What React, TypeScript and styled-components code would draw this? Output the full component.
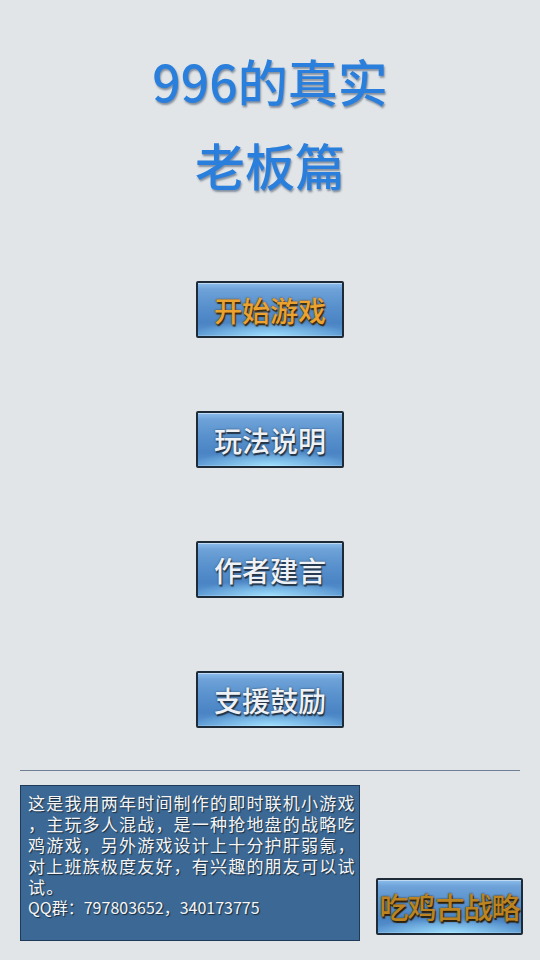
import React from "react";
import styled, { createGlobalStyle } from "styled-components";

const GlobalStyle = createGlobalStyle`
  html, body {
    margin: 0;
    padding: 0;
    background: #e1e5e7;
  }
  body {
    font-family: "Noto Sans CJK SC", "Noto Sans", sans-serif;
  }
`;

const Page = styled.div`
  width: 540px;
  height: 960px;
  display: flex;
  flex-direction: column;
  align-items: center;
  background: #e1e5e7;
  overflow: hidden;
`;

const Title = styled.h1`
  margin: 38px 0 0;
  font-size: 50px;
  font-weight: 500;
  line-height: 84px;
  color: #2a7fdc;
  text-align: center;
  text-shadow: 1px 2px 2px rgba(20, 40, 70, 0.45);
`;

const Menu = styled.nav`
  margin-top: 75px;
  display: flex;
  flex-direction: column;
  gap: 73px;
`;

const GlossButton = styled.button<{ $gold?: boolean; $w?: number }>`
  width: ${(p) => p.$w ?? 148}px;
  height: 57px;
  padding: 0;
  box-sizing: border-box;
  border: 2px solid #1d2a37;
  border-radius: 2px;
  background:
    radial-gradient(ellipse 55% 30% at 50% 100%, rgba(160, 225, 255, 0.95), rgba(160, 225, 255, 0) 100%),
    linear-gradient(180deg, #8cbdec 0%, #6ea2d8 12%, #5790cc 45%, #4b84c4 75%, #5c9ad4 100%);
  box-shadow: inset 0 1px 0 rgba(255, 255, 255, 0.45), inset 0 -1px 0 rgba(255, 255, 255, 0.2);
  font-family: "Noto Sans CJK SC", sans-serif;
  font-size: 28px;
  font-weight: 500;
  line-height: 1;
  color: ${(p) => (p.$gold ? "#eca22e" : "#eef2f6")};
  text-shadow: ${(p) =>
    p.$gold
      ? "1px 2px 1px #3a2a10, 0 0 2px #5a3a10"
      : "1px 2px 1px #243446, 0 0 2px #30465e"};
  display: flex;
  align-items: center;
  justify-content: center;
  cursor: pointer;
`;

const Divider = styled.hr`
  margin: 42px 0 0;
  width: 500px;
  border: none;
  border-top: 1.5px solid #6f7f94;
`;

const Footer = styled.div`
  width: 540px;
  box-sizing: border-box;
  padding: 0 17px 0 20px;
  margin-top: 14px;
  display: flex;
  align-items: flex-end;
  justify-content: space-between;
`;

const InfoPanel = styled.div`
  width: 340px;
  height: 156px;
  box-sizing: border-box;
  background: #3b6894;
  border: 1.5px solid #1f3a58;
  padding: 6px 0 0 7px;
  color: #f4f6f8;
  text-shadow: 1px 1px 1px #1a2a3a;
`;

const Line = styled.div<{ $latin?: boolean }>`
  font-size: ${(p) => (p.$latin ? 16 : 17)}px;
  letter-spacing: ${(p) => (p.$latin ? 0 : 1.2)}px;
  line-height: 21px;
  white-space: nowrap;
`;

const StrategyButton = styled(GlossButton)`
  margin-bottom: 6px;
  font-size: 29px;
  color: #bc8420;
  letter-spacing: -1px;
  text-shadow: 1px 2px 1px #2c1e0a, 0 0 2px #3a2808;
`;

const menuItems = [
  { label: "开始游戏", gold: true },
  { label: "玩法说明" },
  { label: "作者建言" },
  { label: "支援鼓励" },
];

const intro = [
  "这是我用两年时间制作的即时联机小游戏",
  "，主玩多人混战，是一种抢地盘的战略吃",
  "鸡游戏，另外游戏设计上十分护肝弱氪，",
  "对上班族极度友好，有兴趣的朋友可以试",
  "试。",
];

export default function App() {
  return (
    <>
      <GlobalStyle />
      <Page>
        <Title>
          996的真实
          <br />
          老板篇
        </Title>
        <Menu>
          {menuItems.map((item) => (
            <GlossButton key={item.label} $gold={item.gold}>
              {item.label}
            </GlossButton>
          ))}
        </Menu>
        <Divider />
        <Footer>
          <InfoPanel>
            {intro.map((line) => (
              <Line key={line}>{line}</Line>
            ))}
            <Line $latin>QQ群：797803652，340173775</Line>
          </InfoPanel>
          <StrategyButton $w={147}>吃鸡古战略</StrategyButton>
        </Footer>
      </Page>
    </>
  );
}
